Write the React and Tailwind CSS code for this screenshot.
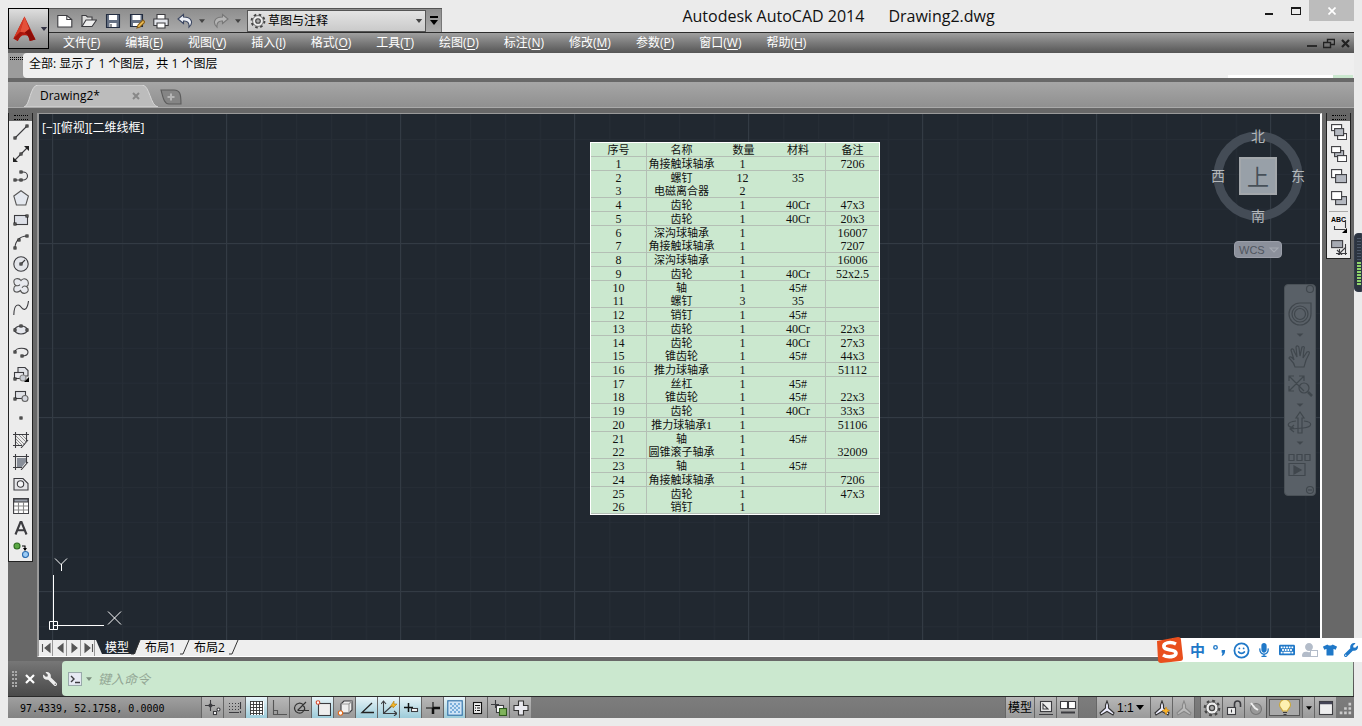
import {
  FaKeyboard,
  FaMicrophone,
  FaTshirt,
  FaUserAlt,
  FaWrench,
} from "react-icons/fa";
import { Smile } from "lucide-react";

const MENUS = [
  ["文件", "F"],
  ["编辑", "E"],
  ["视图", "V"],
  ["插入", "I"],
  ["格式", "O"],
  ["工具", "T"],
  ["绘图", "D"],
  ["标注", "N"],
  ["修改", "M"],
  ["参数", "P"],
  ["窗口", "W"],
  ["帮助", "H"],
];

const PARTS = [
  ["1", "角接触球轴承", "1", "", "7206"],
  ["2", "螺钉", "12", "35", ""],
  ["3", "电磁离合器", "2", "", ""],
  ["4", "齿轮", "1", "40Cr", "47x3"],
  ["5", "齿轮", "1", "40Cr", "20x3"],
  ["6", "深沟球轴承", "1", "", "16007"],
  ["7", "角接触球轴承", "1", "", "7207"],
  ["8", "深沟球轴承", "1", "", "16006"],
  ["9", "齿轮", "1", "40Cr", "52x2.5"],
  ["10", "轴", "1", "45#", ""],
  ["11", "螺钉", "3", "35", ""],
  ["12", "销钉", "1", "45#", ""],
  ["13", "齿轮", "1", "40Cr", "22x3"],
  ["14", "齿轮", "1", "40Cr", "27x3"],
  ["15", "锥齿轮", "1", "45#", "44x3"],
  ["16", "推力球轴承", "1", "", "51112"],
  ["17", "丝杠", "1", "45#", ""],
  ["18", "锥齿轮", "1", "45#", "22x3"],
  ["19", "齿轮", "1", "40Cr", "33x3"],
  ["20", "推力球轴承1", "1", "", "51106"],
  ["21", "轴", "1", "45#", ""],
  ["22", "圆锥滚子轴承", "1", "", "32009"],
  ["23", "轴", "1", "45#", ""],
  ["24", "角接触球轴承", "1", "", "7206"],
  ["25", "齿轮", "1", "", "47x3"],
  ["26", "销钉", "1", "", ""],
];

// rows whose bottom rule drops out at this zoom level
const NO_RULE = ["2", "6", "10", "14", "17", "21", "25"];

const Icon = ({ children, className = "size-4", box = "0 0 16 16" }) => (
  <svg viewBox={box} className={`shrink-0 ${className}`} fill="none" stroke="#3c3c40" strokeWidth="1.1" aria-hidden="true">
    {children}
  </svg>
);

// small hollow grip square used by most of the draw icons
const Node = ({ x, y }) => <rect x={x - 1} y={y - 1} width="2" height="2" fill="#fff" stroke="#222" />;

const Gear = ({ className }) => (
  <Icon className={className}>
    <circle cx="8" cy="8" r="6.4" strokeWidth="2" strokeDasharray="2.5 2.52" stroke="#444" />
    <circle cx="8" cy="8" r="5.4" fill="#eee" stroke="#555" strokeWidth="0.8" />
    <circle cx="8" cy="8" r="2.3" fill="#aaa" stroke="#444" />
  </Icon>
);

const DRAW_TOOLS = [
  ["直线", <><path d="M2 14 14 2" /><Node x={2} y={14} /><Node x={14} y={2} /></>],
  ["构造线", <><path d="M2 14 14 2" /><path d="M0 16v-5l5 5zM16 0v5l-5-5z" fill="#222" stroke="none" /><Node x={8} y={8} /></>],
  ["多段线", <><path d="M2 12h8a4.5 4 0 0 0 0-8H8" /><Node x={2} y={12} /><Node x={8} y={12} /><Node x={8} y={4} /></>],
  ["正多边形", <path d="M8 .8 15.4 6 12.8 15H3.4L.8 6z" fill="#e4e8ef" stroke="#555" />],
  ["矩形", <><rect x="1.5" y="3.5" width="13" height="9" fill="#dde0e8" /><Node x={2} y={12} /><Node x={14} y={4} /></>],
  ["圆弧", <><path d="M2 14C2 7 7 2 14 2" /><Node x={2} y={14} /><Node x={6} y={6} /><Node x={14} y={2} /></>],
  ["圆", <><circle cx="8" cy="8" r="7.2" fill="#e3e5ea" /><path d="m8 8 4-4" /><Node x={8} y={8} /></>],
  ["修订云线", <path d="M8 2.500C6-.5 0 0 1 4.500c0 1.500 1 2.500 2 3-3 1-3 6 0 6.500 2 .5 3.500-.5 4.500-1.500 1 3.500 6 4 7.500.5.500-2 0-3.500-1.500-4.500C16 7.500 16 3 13.500 1.500 11.500.3 9 1 8 2.500zM3 7.500c1.500.5 3 .3 4-.8M13.500 8.500c-1.500-.8-3.500-.3-4.500 1.200" fill="#e7e9ee" stroke="#555" />],
  ["样条曲线", <path d="M.8 15C1 3 6 4 8 7s6 5 7.500-6" />],
  ["椭圆", <><ellipse cx="8" cy="8" rx="6.500" ry="4" fill="#e4e6ec" /><Node x={8} y={4} /><Node x={2} y={8} /><Node x={14} y={8} /></>],
  ["椭圆弧", <><path d="M2 8c0-5 13-5 13 0 0 3-3 4-6 4" /><Node x={2} y={8} /><Node x={9} y={12} /></>],
  ["插入块", <><path d="M5 7V1.500h7l3 3V10H5z" fill="#dfe1e6" /><rect x="1.500" y="6.500" width="9" height="6" fill="#e9e9ee" /><circle cx="10" cy="12" r="3" fill="#c7cbd3" stroke="#888" /><Node x={2} y={13} /><path d="M16 11v5h-5z" fill="#000" stroke="none" /></>],
  ["创建块", <><rect x="2.500" y="3.500" width="10" height="7" fill="#dfe1e6" /><circle cx="12" cy="10.500" r="3" fill="#d4d7de" stroke="#666" /><Node x={2} y={11} /></>],
  ["点", <Node x={8} y={8} />],
  ["图案填充", <><path d="M2.500 0v16M13.500 0v9M0 2.500h16M0 13.500h9" /><path d="m3 4 9 9M3 7l6 6M3 10l3 3M6 3l7 7M9 3l4 4" stroke="#777" strokeWidth=".8" /><path d="m15 8-7 8" /></>],
  ["渐变色", <><path d="M4 4h9v4l-4 5H4z" fill="#888e98" stroke="none" /><path d="M2.500 0v16M13.500 0v9M0 2.500h16M0 13.500h9m6-5.500-7 8" /></>],
  ["面域", <><path d="M1 2.500h9l5 5V14H1z" fill="#e5e5e8" /><circle cx="7.500" cy="8" r="3.200" fill="#f4f4f6" /></>],
  ["表格", <><rect x=".6" y=".6" width="15" height="15" fill="#fff" /><path d="M1 1h14v3H1z" fill="#9aa0aa" /><path d="M1 8h14M1 12h14M5.500 4v11M10.500 4v11" stroke="#888" /></>],
  ["多行文字", <path d="M2.500 14.500 7.500 2h1l5 12.500M4.300 10.200h7.400" strokeWidth="2.100" />],
  ["添加选定对象", <><circle cx="4" cy="4" r="3" fill="#5aa843" stroke="#2d6b20" /><circle cx="12.500" cy="12.500" r="3" fill="#9cccf5" stroke="#2b6cb0" /><path d="M9 4h3v4" stroke="#000" /><path d="m10 6 2 3 2-3z" fill="#000" stroke="none" /></>],
];

const ORDER_TOOLS = [
  ["前置", <><rect x=".6" y=".6" width="10" height="6" fill="#fff" /><rect x="6.600" y="9.600" width="9" height="6" fill="#fff" /><rect x="3.600" y="4.600" width="9" height="7" fill="#b4b8c0" /></>],
  ["后置", <><rect x="3.600" y="4.600" width="9" height="6" fill="#b4b8c0" /><rect x=".6" y=".6" width="9" height="6" fill="#fff" /><rect x="6.600" y="9.600" width="9" height="6" fill="#fff" /></>],
  ["置于对象之上", <><rect x=".6" y="1.600" width="10" height="8" fill="#fff" /><rect x="4.600" y="6.600" width="11" height="8" fill="#b4b8c0" /></>],
  ["置于对象之下", <><rect x="4.600" y="6.600" width="11" height="8" fill="#b4b8c0" /><rect x=".6" y="1.600" width="10" height="8" fill="#fff" /></>],
];

const STATUS_TOGGLES = [
  ["推断约束", false, <><path d="M0 5.500h10M5.500 0v11" /><circle cx="5.500" cy="5.500" r="1.500" /><rect x="8.500" y="11.500" width="3" height="3" fill="#fff" /><circle cx="13.500" cy="9.500" r="1.500" fill="#fff" /></>],
  ["捕捉模式", false, <><path d="M2 3.500h10M2 6.500h10M2 9.500h10" strokeDasharray="1 2" /><path d="M2 12.500h10M13.500 2v7m0 2v2" /></>],
  ["栅格显示", true, <><rect x="1" y="1" width="14" height="14" fill="#fff" stroke="none" /><path d="M1.500 1v14M4.500 1v14M7.500 1v14M10.500 1v14M13.500 1v14M1 1.500h13M1 4.500h13M1 7.500h13M1 10.500h13M1 13.500h13" stroke="#333" strokeWidth=".9" /></>],
  ["正交模式", false, <path d="M2.500 0v14.500H16M2.500 10.500h4v4" stroke="#555" />],
  ["极轴追踪", false, <><path d="M10 4.500a5 5 0 1 0 1.500 4.500M4.500 10.500 13 2M5 10.500h11M10 5.500c1.500 1 2 3 1.500 5" stroke="#333" /></>],
  ["对象捕捉", true, <><rect x="3.500" y="3.500" width="12" height="12" fill="#eee" /><circle cx="3" cy="2.500" r="1.800" stroke="#d9482b" fill="#fff" /></>],
  ["三维对象捕捉", false, <><path d="m4 4 3-3h8v9l-3 3H4z" fill="#eee" /><path d="M4 4h8v9M12 4l3-3" stroke="#999" /><circle cx="3.500" cy="13" r="2.200" stroke="#e06a1b" fill="#fff" /></>],
  ["对象捕捉追踪", true, <path d="M13 3 3 12.500h12" stroke="#222" strokeWidth="1.300" />],
  ["动态UCS", true, <><path d="M2.500 2v11.500H16M3 13l10-9M0 4l2.500-3L5 4M13 11l3 2.500-3 2.500" /><path d="m9 7 4-6v3h3l-4 4V6z" fill="#f3b72a" stroke="#b37a0a" strokeWidth=".6" /></>],
  ["动态输入", true, <><path d="M1 7.500h9M5.500 3v9" stroke="#111" strokeWidth="1.500" /><rect x="8.500" y="8.500" width="6" height="3" fill="#fff" /></>],
  ["线宽", false, <><path d="M1 8h7M8 2v6" stroke="#111" /><path d="M8 8h7M8 8v6" stroke="#111" strokeWidth="2.500" /></>],
  ["透明度", true, <><rect x=".8" y=".8" width="14.400" height="14.400" fill="#cfe4f6" stroke="#2d6ea5" /><path d="M3 4h10M3 8h10M3 12h10" stroke="#7aaedb" strokeWidth="2" strokeDasharray="2 2" /><path d="M5 6h8M5 10h8" stroke="#7aaedb" strokeWidth="2" strokeDasharray="2 2" /></>],
  ["快捷特性", false, <><rect x="4.500" y="2.500" width="8" height="11" fill="#eee" stroke="#111" /><path d="M6 5.500h5M6 8h1m1 0h3M6 10.500h1m1 0h3" stroke="#111" /></>],
  ["选择循环", false, <><path d="M0 4.500h8M4.500 0v8" /><rect x="5.500" y="5.500" width="7" height="7" fill="#fff" /><rect x="8.500" y="8.500" width="7" height="7" fill="#7fb35b" stroke="#2d5a1c" /></>],
  ["注释监视器", false, <path d="M5.500 1h5v4.500H15v5h-4.500V15h-5v-4.500H1v-5h4.500z" fill="#e9e9ef" stroke="#333" />],
];

const CARET = <path d="M0 0h8L4 5z" fill="currentColor" stroke="none" />;
const Caret = ({ className = "h-[5px] w-2" }) => <Icon box="0 0 8 5" className={className}>{CARET}</Icon>;

const ToolCell = ({ label, children }) => (
  <button type="button" aria-label={label} className="flex h-[22px] w-full items-center justify-center">
    <Icon>{children}</Icon>
  </button>
);

const ToolbarGrip = () => (
  <div className="flex h-2 items-center justify-center bg-[#666]">
    <div className="h-[5px] w-3.5 border-y border-dotted border-black" />
  </div>
);

function QuickAccess() {
  return (
    <div className="flex h-6 items-center border-t border-[#555] bg-linear-to-b from-[#8e8e8e] to-[#ababab] pl-2 text-[#444]">
      <div className="flex items-center gap-2">
        <button type="button" aria-label="新建"><Icon><path d="M.8 2.500h9l5 4V14H.8z" fill="#fff" /><path d="M9.800 2.500v4h5" /></Icon></button>
        <button type="button" aria-label="打开"><Icon><path d="M1 13.500V2.500h4l1.500 1.500H11v3" fill="#ddd" /><path d="m1 13.500 4-6.500h10.500l-4.500 6.500z" fill="#eee" /></Icon></button>
        <button type="button" aria-label="保存"><Icon><path d="M1.500 1.500h13v13h-13z" fill="#667184" stroke="#222c40" /><path d="M4 2h8v5H4zM4.500 10h7v4h-7z" fill="#fff" stroke="none" /><path d="M6 11v3" /></Icon></button>
        <button type="button" aria-label="另存为"><Icon><path d="M1.500 1.500h12v12h-12z" fill="#667184" stroke="#222c40" /><path d="M3.500 2h8v5h-8zM4 10h7v3H4z" fill="#fff" stroke="none" /><path d="m8 15 1-3 5-5 2 2-5 5z" fill="#f0c25a" stroke="#885d16" /></Icon></button>
        <button type="button" aria-label="打印"><Icon><path d="M4 6V1.500h8V6" fill="#fff" /><path d="M.8 6h14.400v6.500H.8z" fill="#e4e6ec" /><path d="M4 10h8v5H4z" fill="#fff" /></Icon></button>
        <button type="button" aria-label="放弃"><Icon><path d="M6.500 1.500 1 6l5.500 4.500V8c4-.5 6 2 5.500 6 4.500-4 3-10-5.500-10z" fill="#eef1f7" stroke="#3a4560" /></Icon></button>
      </div>
      <Caret className="ml-1.5 h-1 w-1.5" />
      <button type="button" aria-label="重做" className="ml-2"><Icon><path d="M9.500 1.500 15 6l-5.500 4.500V8c-4-.5-6 2-5.500 6-4.500-4-3-10 5.500-10z" fill="#b5b5b5" stroke="#777" /></Icon></button>
      <Caret className="mx-1.5 h-1 w-1.5" />
      <div className="relative flex h-[22px] w-[179px] items-center border border-[#555] bg-linear-to-b from-[#e4e4e4] to-[#cacaca] pl-0.5">
        <Gear className="size-4" />
        <select aria-label="工作空间" className="h-full flex-1 appearance-none bg-transparent pl-0.5 text-[12px] leading-5 text-black">
          <option>草图与注释</option>
        </select>
        <Caret className="pointer-events-none absolute right-0.5 h-1 w-2" />
      </div>
      <button type="button" aria-label="自定义快速访问工具栏" className="flex h-full w-4 flex-col items-center justify-center gap-0.5 border-r border-[#777] text-black">
        <span className="h-0.5 w-2 bg-black" />
        <Caret />
      </button>
    </div>
  );
}

function Header() {
  return (
    <header className="flex bg-[#ebebeb]">
      <div className="flex w-[41px] flex-col pt-2">
        <button type="button" aria-label="应用程序菜单" className="flex h-[41px] items-center gap-1 border border-black bg-linear-to-b from-[#dedede] to-[#8c8c8c] pl-1 text-[#334]">
          <svg viewBox="0 0 24 26" className="h-[26px] w-6" aria-hidden="true">
            <path d="M12 0 23.500 24l-6 1.500c-1-5-2-6-5.500-6s-5 2-7 6L.5 23z" fill="#b5180f" />
            <path d="M12 0 7.500 16 .5 23z" fill="#d63a25" />
            <path d="M12 0 17 13l-5 4-4.500-1z" fill="#e4503a" />
            <path d="m12 17 5-4 6.500 11-6 1.500C16 20 15 18 12 17z" fill="#8c0d08" />
            <path d="M.5 23 7.500 16l4.500 1c-4 1-5 4-7 8.500z" fill="#a3160e" />
          </svg>
          <Caret className="h-1 w-2" />
        </button>
        <div className="h-1 bg-[#606060]" />
      </div>
      <div className="flex min-w-0 flex-1 flex-col">
        <div className="flex h-8">
          <div className="pt-2"><QuickAccess /></div>
          <h1 className="flex flex-1 justify-center gap-6 pt-1.5 pr-5 text-[16px] leading-5 text-[#111]">
            <span>Autodesk AutoCAD 2014</span>
            <span>Drawing2.dwg</span>
          </h1>
          <div className="flex items-start">
            <button type="button" aria-label="最小化" className="flex h-[21px] w-[27px] items-center justify-center pt-1.5"><span className="h-0.5 w-2 bg-[#1a1a1a]" /></button>
            <button type="button" aria-label="最大化" className="flex h-[21px] w-[27px] items-center justify-center"><span className="h-2 w-2.5 border border-t-2 border-[#1a1a1a]" /></button>
            <button type="button" aria-label="关闭" className="flex h-[21px] w-[45px] items-center justify-center bg-[#bcbcbc]">
              <Icon box="0 0 8 8" className="size-2"><path d="m.5.5 7 7m0-7-7 7" stroke="#fff" strokeWidth="1.700" /></Icon>
            </button>
          </div>
        </div>
        <nav className="flex h-[21px] items-center border-t border-[#2c2c2c] bg-linear-to-b from-[#a0a0a0] to-[#565656] pr-1 pl-3.5">
          <div className="flex gap-[25px] text-[12px] leading-5 whitespace-nowrap text-white">
            {MENUS.map(([name, key]) => (
              <button key={key} type="button">{name}(<u className="underline-offset-2">{key}</u>)</button>
            ))}
          </div>
          <div className="ml-auto flex items-center gap-1.5">
            <button type="button" aria-label="最小化图形" className="pt-1.5"><span className="block h-0.5 w-2.5 bg-[#2a2a2a]" /></button>
            <button type="button" aria-label="还原图形">
              <Icon box="0 0 12 11" className="h-[11px] w-3"><path d="M4.500 4V1.500h7v5H8M.5 4.500h7v5h-7z" stroke="#222" strokeWidth="1.400" /></Icon>
            </button>
            <button type="button" aria-label="关闭图形">
              <Icon box="0 0 9 9" className="size-[9px]"><path d="m1 1 7 7m0-7L1 8" stroke="#222" strokeWidth="2.200" /></Icon>
            </button>
          </div>
        </nav>
      </div>
    </header>
  );
}

function FileTabs() {
  return (
    <div className="flex h-[26px] items-end border-b border-[#aaa] bg-linear-to-b from-[#a6a6a6] to-[#909090] pl-4">
      <div className="relative flex h-[22px] w-[134px] items-center justify-between pr-[18px] pl-4">
        <svg viewBox="0 0 134 22" preserveAspectRatio="none" className="absolute inset-0 size-full" aria-hidden="true">
          <path d="M0 22C6 21 6 0 14 0h104c8 0 8 21 16 22z" fill="#bcbcbc" stroke="#d8d8d8" />
        </svg>
        <button type="button" className="relative text-[12px] leading-5 text-black">Drawing2*</button>
        <button type="button" aria-label="关闭选项卡" className="relative">
          <Icon box="0 0 8 8" className="size-2"><path d="m1 1 6 6m0-6L1 7" stroke="#888" strokeWidth="2" /></Icon>
        </button>
      </div>
      <button type="button" aria-label="新图形" className="mb-0.5 ml-0.5">
        <Icon box="0 0 22 16" className="h-4 w-[22px]">
          <path d="M1 1h13c6 0 7 4 7 14H9C4 15 3 8 1 1z" fill="#858585" stroke="#5c5c5c" />
          <path d="M11 4.500v7M7.500 8h7" stroke="#b5b5b5" strokeWidth="2" />
        </Icon>
      </button>
    </div>
  );
}

function PartsTable() {
  const rule = "border-b border-b-[#b4bfb5]";
  const divider = "border-l border-l-[#b4bfb5]";
  return (
    <table className="w-[290px] table-fixed border-separate border-spacing-0 border border-white bg-[#cbe8cf] text-center font-['Liberation_Serif','Noto_Sans_CJK_SC',serif] text-[12px] leading-3 text-[#111]">
      <colgroup>
        <col className="w-[55px]" />
        <col className="w-[70px]" />
        <col className="w-[55px]" />
        <col className="w-[54px]" />
        <col className="w-[54px]" />
      </colgroup>
      <thead>
        <tr className="h-3.5 text-[11px]">
          {["序号", "名称", "数量", "材料", "备注"].map((h, i) => (
            <th key={h} className={`p-0 font-normal ${rule} ${i === 1 || i === 4 ? divider : ""}`}>{h}</th>
          ))}
        </tr>
      </thead>
      <tbody>
        {PARTS.map(([no, name, qty, material, note]) => {
          const ruled = !NO_RULE.includes(no);
          const line = ruled ? rule : "";
          return (
            <tr key={no} className={ruled ? "h-3.5" : "h-[13px]"}>
              <td className={`p-0 ${line}`}>{no}</td>
              <td className={`p-0 text-[11px] whitespace-nowrap ${line} ${divider}`}>{name}</td>
              <td className={`p-0 pr-0.5 ${line}`}>{qty}</td>
              <td className={`p-0 ${line}`}>{material}</td>
              <td className={`p-0 ${line} ${divider}`}>{note}</td>
            </tr>
          );
        })}
      </tbody>
    </table>
  );
}

const ViewCube = () => (
  <div className="flex w-[100px] flex-col items-center gap-[15px]">
    <div className="relative grid size-[100px] grid-cols-[20px_60px_20px] grid-rows-[20px_60px_20px] place-items-center text-[14px] leading-5 text-[#b4b8bb]">
      <svg viewBox="0 0 100 100" className="absolute inset-0 size-full" aria-hidden="true">
        <circle cx="50" cy="50" r="40" fill="none" stroke="#444c56" strokeWidth="9" />
      </svg>
      <span className="relative col-start-2 row-start-1">北</span>
      <span className="relative col-start-1 row-start-2">西</span>
      <button type="button" className="relative col-start-2 row-start-2 flex size-[38px] items-center justify-center border-2 border-[#a3a7ab] bg-[#98a0a8] text-[22px] leading-6 text-[#475058]">上</button>
      <span className="relative col-start-3 row-start-2">东</span>
      <span className="relative col-start-2 row-start-3">南</span>
    </div>
    <button type="button" className="flex h-[17px] w-12 items-center gap-1 rounded border border-[#9b9fa9] bg-[#8b909b] pl-1 font-['Liberation_Sans',sans-serif] text-[11px] leading-4 text-[#50565f]">
      WCS
      <Icon box="0 0 10 6" className="h-1.5 w-2.5"><path d="M1 1h8L5 5z" stroke="#a5a9b2" /></Icon>
    </button>
  </div>
);

const NavBar = () => (
  <div className="h-[212px] w-8 rounded border border-[#4a5157] bg-[#596067]">
    <svg viewBox="1 1 30 210" className="size-full" fill="none" stroke="#40474d" strokeWidth="1.200" aria-hidden="true">
      <circle cx="26" cy="5" r="3.500" />
      <path d="M16 19h11v11a11 11 0 1 1-11-11z" />
      <circle cx="16" cy="30" r="8" />
      <circle cx="16" cy="30" r="5.500" />
      <path d="M11 83c-1-5-4-7-6-9 1-2 3-1 5 2l-3-10c1-2 3-1 3 1l3 6-1-10c1-2 3-1 3 1l1 8 2-9c2-1 3 0 2 2l-1 9 4-6c2-1 3 0 2 2-3 5-4 8-5 13z" />
      <path d="m5 92 15 15M20 92 5 107M5 97v-5h5M15 92h5v5M5 102v5h5" />
      <circle cx="20" cy="104" r="5" />
      <path d="m24 108 4 4" strokeWidth="2.500" />
      <path d="M14 149v-15h-2l4-6 4 6h-2v15z" />
      <path d="M12 137c-10 1-10 6-2 7M20 137c9 1 9 6-1 7l-12 1M10 141l-4 4 4 3" />
      <path d="M5 170.500h5v6H5zM13 170.500h5v6h-5zM21 170.500h5v6h-5zM5 179.500h16v12H5z" />
      <path d="m10 182 7 4-7 4z" fill="#40474d" />
      <path d="m14 50 2 2 2-2zM14 120l2 2 2-2zM14 158l2 2 2-2z" fill="#40474d" />
      <circle cx="26" cy="206" r="3.500" />
      <path d="M24 206h4" />
    </svg>
  </div>
);

function DrawingArea() {
  return (
    <main className="relative min-h-0 flex-1 overflow-hidden bg-[#212830]">
      <svg className="absolute inset-0 size-full" aria-hidden="true">
        <defs>
          <pattern id="minor" x="13.500" y="129.500" width="34.800" height="34.800" patternUnits="userSpaceOnUse">
            <path d="M.5 0v34.800M0 .5h34.800" stroke="#262d36" />
          </pattern>
          <pattern id="major" x="13" y="129" width="174" height="174" patternUnits="userSpaceOnUse">
            <path d="M.5 0v174M0 .5h174" stroke="#333b44" />
          </pattern>
        </defs>
        <rect width="100%" height="100%" fill="url(#minor)" />
        <rect width="100%" height="100%" fill="url(#major)" />
      </svg>
      <p className="absolute top-1 left-[3px] text-[12px] leading-5 text-white">[−][俯视][二维线框]</p>
      <div className="absolute top-7 left-[551px]"><PartsTable /></div>
      <div className="absolute top-3 right-3"><ViewCube /></div>
      <div className="absolute top-[170px] right-1"><NavBar /></div>
      <svg viewBox="0 0 80 76" className="absolute bottom-1.5 left-2.5 h-[76px] w-20" fill="none" stroke="#fff" aria-hidden="true">
        <path d="M4.500 71.500V17M4.500 67.500H55M.5 63.500h8v8h-8z" />
        <path d="m6 .5 6 6 6-6M12.500 6v7M59 53.500l13 13M72 53.500l-13 13" />
      </svg>
    </main>
  );
}

const SheetSlash = ({ first }) => (
  <svg viewBox="0 0 10 16" className="h-4 w-2.5 shrink-0" aria-hidden="true">
    {first && <path d="M0 0h9L4 14H0z" fill="#212830" />}
    <path d="M9 0 3 14H0" fill="none" stroke="#333" />
  </svg>
);

function SheetTabs() {
  const steps = [
    ["第一个布局", "M2.500 2v8M10 2v8L5 6z"],
    ["上一个布局", "M9 2v8L4 6z"],
    ["下一个布局", "M4 2v8l5-4z"],
    ["最后一个布局", "M3 2v8l5-4zM10.500 2v8"],
  ];
  return (
    <div className="flex h-4 bg-[#eee] text-[12px] leading-4 text-black">
      {steps.map(([label, d]) => (
        <button key={label} type="button" aria-label={label} className="flex w-3.5 items-center justify-center border-r border-[#999]">
          <Icon box="0 0 12 12" className="size-3"><path d={d} fill="#555" stroke="#555" /></Icon>
        </button>
      ))}
      <svg viewBox="0 0 10 16" className="h-4 w-2.5" aria-hidden="true"><path d="M1 0h9v14H7z" fill="#212830" /></svg>
      <button type="button" className="h-3.5 bg-[#212830] pr-0.5 text-white">模型</button>
      <SheetSlash first />
      <button type="button" className="px-1">布局1</button>
      <SheetSlash />
      <button type="button" className="px-1">布局2</button>
      <SheetSlash />
    </div>
  );
}

function Workspace() {
  return (
    <div className="flex min-h-0 flex-1">
      <aside className="w-[25px] self-start border-x border-b border-[#222] bg-[#ececec]">
        <ToolbarGrip />
        {DRAW_TOOLS.map(([label, art]) => <ToolCell key={label} label={label}>{art}</ToolCell>)}
      </aside>
      <div className="ml-1 flex min-w-0 flex-1 flex-col border-t border-r-2 border-b border-l-2 border-t-[#9a9a9a] border-r-white border-b-white border-l-[#9a9a9a]">
        <DrawingArea />
        <SheetTabs />
      </div>
      <aside className="mr-[3px] ml-1 w-[25px] self-start border-x border-b border-[#222] bg-[#ececec]">
        <ToolbarGrip />
        {ORDER_TOOLS.map(([label, art]) => <ToolCell key={label} label={label}>{art}</ToolCell>)}
        <hr className="mx-0.5 my-0.5 border-[#aaa]" />
        <button type="button" aria-label="文字前置" className="relative flex h-[22px] w-full justify-center text-black">
          <span className="font-['Liberation_Sans',sans-serif] text-[7px] leading-3 font-bold">ABC</span>
          <Icon className="absolute top-1 size-4"><path d="M3.500 8v3.500H14M14.500 2v8" /><path d="M16 10v5h-5z" fill="#000" stroke="none" /></Icon>
        </button>
        <ToolCell label="图案填充后置"><rect x=".6" y="1.600" width="11" height="7" fill="#a5a9b2" /><path d="M14.500 5v11M5 14.500h11M8.500 10v6M7 16l8-8M6 11l5 5" /></ToolCell>
      </aside>
    </div>
  );
}

function CommandLine() {
  return (
    <div className="flex h-[35px] bg-linear-to-b from-[#777] to-[#4a4a4a]">
      <div className="flex w-[54px] items-center gap-2 pl-1">
        <div className="flex h-4 w-[5px] border-x-2 border-dotted border-[#aaa]" />
        <button type="button" aria-label="关闭命令行"><Icon box="0 0 10 10" className="size-2.5"><path d="m1 1 8 8m0-8L1 9" stroke="#fff" strokeWidth="2.200" /></Icon></button>
        <button type="button" aria-label="自定义"><FaWrench className="size-3.5 -scale-x-100 text-[#eee]" /></button>
      </div>
      <div className="mr-px flex flex-1 items-center gap-1 rounded-l-sm bg-[#cbe8cf] pl-1.5">
        <Icon box="0 0 14 14" className="size-3.5"><rect x=".5" y=".5" width="13" height="13" fill="#e7eaf4" stroke="#9aa" /><path d="m3 4 3 3-3 3M7 10.500h5" strokeWidth="1.400" /></Icon>
        <span className="flex text-[#7c8f7e]"><Caret className="h-1 w-1.5" /></span>
        <input aria-label="命令" placeholder="键入命令" className="ml-0.5 h-6 flex-1 bg-transparent text-[13px] leading-5 italic outline-none placeholder:text-[#93a795]" />
      </div>
    </div>
  );
}

const StatusButton = ({ label, on, children }) => (
  <button
    type="button"
    aria-label={label}
    aria-pressed={on}
    className={`flex h-full w-[22px] shrink-0 items-center justify-center border-l border-[#666] ${on ? "bg-linear-to-b from-[#e8f4f8] to-[#9ccbd9]" : "bg-linear-to-b from-[#b8b8b8] to-[#999]"}`}
  >
    {children}
  </button>
);

// annotation scale figure; the variants add a spark or fade it out
const Scale = ({ faded, spark }) => (
  <Icon>
    <path d="M8 1 6.500 5v3L1 13l1 2 6-3.500 6 3.500 1-2-5.500-5V5z" fill={faded ? "#bbb" : "#eef"} stroke={faded ? "#888" : "#333"} />
    {spark && <path d="m12 7 1 2.500 2.500 1L13 12l-1 3-1-3-3-1.500 3-1z" fill="#ffb524" stroke="#c98612" strokeWidth=".6" />}
  </Icon>
);

function StatusBar() {
  return (
    <footer className="flex h-[22px] items-stretch border-t border-[#2a2a2a] bg-linear-to-b from-[#7d7d7d] to-[#757575]">
      <output className="w-[193px] bg-linear-to-b from-[#a0a0a0] to-[#828282] pl-3 font-['DejaVu_Sans_Mono',monospace] text-[10px] leading-6 whitespace-nowrap text-black">
        97.4339, 52.1758, 0.0000
      </output>
      {STATUS_TOGGLES.map(([label, on, art]) => (
        <StatusButton key={label} label={label} on={on}><Icon>{art}</Icon></StatusButton>
      ))}
      <div className="ml-auto flex items-stretch text-[12px] leading-5 text-black">
        <button type="button" className="w-[29px] border-l border-[#666] bg-linear-to-b from-[#b8b8b8] to-[#999]">模型</button>
        <StatusButton label="快速查看布局"><Icon><rect x="2.500" y="1.500" width="11" height="10" fill="#eee" /><path d="M5 4v5h5zM1 14.500h14" /></Icon></StatusButton>
        <StatusButton label="快速查看图形"><Icon><path d="M.5 1.500h7v7h-7zM8.500 1.500h7v7h-7z" fill="#fff" /><path d="M1 12.500h14" strokeWidth="2" /></Icon></StatusButton>
        <div className="w-[18px] border-l border-[#666]" />
        <button type="button" aria-label="注释比例" className="flex w-[54px] items-center gap-0.5 border-l border-[#666] bg-linear-to-b from-[#b8b8b8] to-[#999] pl-0.5 font-['Liberation_Sans',sans-serif]">
          <Scale />
          <span>1:1</span>
          <Caret />
        </button>
        <StatusButton label="注释可见性"><Scale spark /></StatusButton>
        <StatusButton label="自动添加比例"><Scale faded /></StatusButton>
        <div className="w-1.5 border-l border-[#666]" />
        <StatusButton label="切换工作空间"><Gear className="size-[18px]" /></StatusButton>
        <StatusButton label="锁定"><Icon><rect x="1.500" y="7.500" width="8" height="7" fill="#eee" /><path d="M8.500 7V4c0-4 6-4 6 0v3" strokeWidth="1.600" /><path d="M5.500 9.500v3" /></Icon></StatusButton>
        <StatusButton label="硬件加速"><Icon><circle cx="8" cy="9" r="5.500" fill="#999" stroke="#777" /><path d="m3 3 4 5 3 2" stroke="#eee" strokeWidth="2" /></Icon></StatusButton>
        <button type="button" aria-label="隔离对象" className="flex w-9 items-center justify-center border-l border-[#555] bg-[#8e8e8e] p-0.5">
          <span className="flex h-full flex-1 items-center justify-center border border-[#555] bg-[#a9a9a9]">
            <Icon><path d="M5.500 11c0-2-3-3-3-6a5 5 0 0 1 11 0c0 3-3 4-3 6z" fill="#fdf0b0" stroke="#c9a63a" /><path d="M6 12.500h4M6.500 14.500h3" /></Icon>
          </span>
        </button>
        <button type="button" aria-label="状态栏菜单" className="flex w-3 items-center justify-center border-l border-[#666] bg-linear-to-b from-[#b8b8b8] to-[#999]"><Caret className="h-1 w-1.5" /></button>
        <StatusButton label="全屏显示"><Icon><rect x="1.500" y="1.500" width="13" height="13" fill="#eee" /><path d="M2 3h12" stroke="#445" strokeWidth="2.500" /></Icon></StatusButton>
        <Icon className="mt-1 mr-0.5 ml-0.5 size-3.5"><path d="M12 2h3v3h-3zM12 7h3v3h-3zM12 12h3v3h-3zM7 7h3v3H7zM7 12h3v3H7zM2 12h3v3H2z" fill="#ccc" stroke="none" /></Icon>
      </div>
    </footer>
  );
}

const ImeBar = () => (
  <div className="absolute right-0 bottom-16 flex h-6 w-[190px] items-center justify-between bg-white pr-1 pl-[18px] text-[#1f78c8]">
    <svg viewBox="0 0 28 28" className="absolute -left-4 size-7" aria-hidden="true">
      <path d="m1 5 21-4c2 0 3 1 3 3l2 18c0 2-1 3-3 3L5 27c-2 0-3-1-3-3z" fill="#e94f1d" />
      <path d="M20 8C14 5 7 7 8 11s12 2 12 6-8 5-13 2" fill="none" stroke="#fff" strokeWidth="3.600" />
    </svg>
    <button type="button" className="text-[15px] leading-5 font-bold">中</button>
    <button type="button" aria-label="标点"><Icon className="size-3.5"><circle cx="4" cy="5" r="2" stroke="#1f78c8" strokeWidth="1.600" /><path d="M11 8h4c0 4-1 6-4 7l1-4h-1z" fill="#1f78c8" stroke="none" /></Icon></button>
    <button type="button" aria-label="表情"><Smile className="size-[17px]" strokeWidth={2.500} /></button>
    <button type="button" aria-label="语音"><FaMicrophone className="size-3.5" /></button>
    <button type="button" aria-label="软键盘"><FaKeyboard className="size-4" /></button>
    <button type="button" aria-label="用户" className="relative text-[#b3bcc9]">
      <FaUserAlt className="size-3.5" />
      <span className="absolute -right-0.5 bottom-0 h-[7px] w-2 border border-[#b3bcc9] bg-white" />
    </button>
    <button type="button" aria-label="皮肤"><FaTshirt className="size-3.5" /></button>
    <button type="button" aria-label="工具箱"><FaWrench className="size-3.5" /></button>
  </div>
);

export default function App() {
  return (
    <div className="relative flex min-h-screen flex-col overflow-hidden bg-[#ebebeb] px-2 pb-2 font-['Open_Sans','Noto_Sans_CJK_SC',sans-serif]">
      <Header />
      <div className="flex flex-1 flex-col bg-[#686868]">
        <div className="relative flex h-[25px] bg-[#9c9c9c]">
          <div className="mt-1 ml-0.5 h-[3px] w-[13px] border-y border-dotted border-black" />
          <p className="flex-1 rounded-l bg-[#efefef] pl-1.5 text-[12px] leading-[21px] text-black">全部: 显示了 1 个图层，共 1 个图层</p>
          <div className="absolute right-px bottom-0 flex h-[3px] w-[125px] justify-end bg-white">
            <span className="w-5 bg-[#cbe8cf]" />
          </div>
        </div>
        <div className="h-1" />
        <FileTabs />
        <div className="h-[5px]" />
        <Workspace />
        <div className="h-1" />
        <CommandLine />
        <StatusBar />
      </div>
      <ImeBar />
      <div className="absolute top-[233px] right-0 h-[59px] w-2 rounded-l border border-[#333b4a] bg-[#2c3440] pt-1 pl-0.5">
        <div className="h-6 bg-[repeating-linear-gradient(#4c5768_0_1px,transparent_1px_3px)]" />
        <div className="h-6 bg-[repeating-linear-gradient(#8fd46a_0_2px,transparent_2px_3px)]" />
      </div>
    </div>
  );
}
